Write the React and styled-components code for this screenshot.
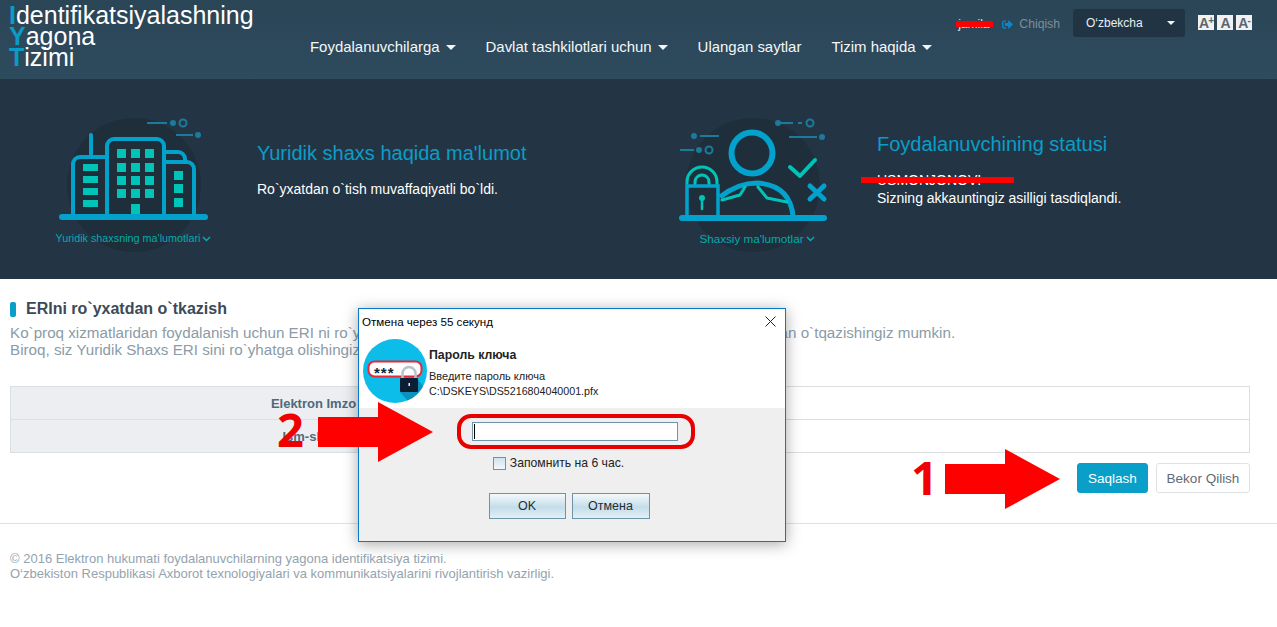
import React from "react";
import styled, { createGlobalStyle } from "styled-components";
import { FaSignOutAlt } from "react-icons/fa";

const Global = createGlobalStyle`
  html, body { margin: 0; padding: 0; background: #fff; overflow: hidden; }
  body { font-family: "Liberation Sans", Arial, sans-serif; }
  * { box-sizing: border-box; }
`;

const Page = styled.div`
  position: relative;
  width: 1277px;
  height: 627px;
  overflow: hidden;
`;

/* ---------- header ---------- */
const Header = styled.header`
  height: 79px;
  display: flex;
  background: linear-gradient(#2a4556, #2e4b5e);
`;
const Logo = styled.div`
  width: 310px;
  flex: none;
  padding: 5px 0 0 9px;
  font-size: 25px;
  line-height: 21px;
  color: #fff;
  white-space: nowrap;
`;
const LogoLine = styled.div``;
const LogoMark = styled.span`
  color: #0a9bc6;
  font-weight: 700;
`;
const HeaderMain = styled.div`
  flex: 1;
  display: flex;
  flex-direction: column;
`;
const Utility = styled.div`
  height: 37px;
  padding: 9px 25px 0 0;
  display: flex;
  justify-content: flex-end;
  align-items: flex-start;
`;
const UserName = styled.span`
  margin-top: 8px;
  font-size: 12px;
  color: #dfe6ea;
  width: 37px;
  text-align: center;
  line-height: 14px;
`;
const Logout = styled.span`
  display: flex;
  align-items: center;
  margin: 8px 13px 0 10px;
  font-size: 12.2px;
  line-height: 14px;
  color: #7d8f9b;
  gap: 6px;
  svg { color: #0a87c9; font-size: 11px; }
`;
const LangSelect = styled.div`
  width: 112px;
  height: 28px;
  padding: 0 10px 0 13px;
  border-radius: 3px;
  background: #213443;
  color: #e8eef2;
  font-size: 12px;
  display: flex;
  align-items: center;
  justify-content: space-between;
`;
const FontSizes = styled.div`
  display: flex;
  gap: 3px;
  margin: 6px 0 0 13px;
`;
const FontBtn = styled.span`
  width: 16px;
  height: 15px;
  background: #f1f1f1;
  color: #5b6670;
  font-size: 14px;
  font-weight: 700;
  line-height: 16px;
  text-align: center;
  white-space: nowrap;
  letter-spacing: -1px;
  sup { font-size: 10px; line-height: 0; vertical-align: 4px; }
`;
const Nav = styled.nav`
  display: flex;
  gap: 30px;
  padding-top: 1px;
`;
const NavItem = styled.span`
  display: flex;
  align-items: center;
  gap: 6px;
  font-size: 14.95px;
  line-height: 18px;
  color: #f4f7f9;
`;
const Caret = styled.i`
  display: inline-block;
  width: 0;
  height: 0;
  border-left: ${(p) => p.$size || 5}px solid transparent;
  border-right: ${(p) => p.$size || 5}px solid transparent;
  border-top: ${(p) => (p.$size ? p.$size : 5)}px solid #f2f5f7;
`;

/* ---------- hero ---------- */
const Hero = styled.section`
  height: 200px;
  background: #233544;
  display: grid;
  grid-template-columns: 618px 1fr;
`;
const HeroPanel = styled.div`
  display: flex;
  align-items: flex-start;
  padding-left: ${(p) => p.$pad}px;
`;
const Graphic = styled.div`
  position: relative;
  flex: none;
  width: ${(p) => p.$w}px;
  height: 134px;
  margin-top: 39px;
  svg { display: block; }
`;
const GraphicLabel = styled.div`
  position: absolute;
  left: ${(p) => p.$shift}px;
  right: 0;
  top: 114px;
  font-size: ${(p) => p.$size}px;
  line-height: 13px;
  color: #05a9ab;
  white-space: nowrap;
  display: flex;
  justify-content: center;
  align-items: center;
  gap: 2px;
`;
const HeroText = styled.div`
  margin-left: ${(p) => p.$gap}px;
  padding-top: ${(p) => p.$top}px;
`;
const HeroTitle = styled.h2`
  margin: 0;
  font-weight: 400;
  font-size: 20px;
  line-height: 24px;
  color: #0a9dc8;
  white-space: nowrap;
`;
const HeroLine = styled.p`
  margin: ${(p) => p.$mt || 0}px 0 0;
  font-size: 14px;
  line-height: 18px;
  color: #fff;
  white-space: nowrap;
`;

/* ---------- content ---------- */
const Content = styled.main`
  padding: 21px 27px 0 10px;
`;
const SectionTitle = styled.h3`
  margin: 0;
  font-size: 16px;
  line-height: 18px;
  font-weight: 700;
  color: #3c4a58;
  display: flex;
  align-items: center;
  gap: 10px;
  &::before {
    content: "";
    width: 6px;
    height: 15px;
    border-radius: 2px;
    background: #0a9fc9;
  }
`;
const Lead = styled.p`
  margin: 6px 0 0;
  font-size: 15.2px;
  line-height: 17px;
  color: #8b9ba7;
  white-space: nowrap;
`;
const DataTable = styled.table`
  margin-top: 28px;
  width: 100%;
  border-collapse: collapse;
  table-layout: fixed;
`;
const Cell = styled.td`
  height: 33px;
  padding: 0;
  border: 1px solid #dcdfe2;
  font-size: 13px;
  font-weight: 700;
  text-align: center;
  color: #50697a;
  background: ${(p) => (p.$label ? "#eceef1" : "#fff")};
  width: ${(p) => (p.$label ? "606px" : "auto")};
`;
const Actions = styled.div`
  margin-top: 10px;
  display: flex;
  justify-content: flex-end;
  gap: 8px;
`;
const Button = styled.button`
  height: 30px;
  width: ${(p) => p.$w}px;
  border-radius: 3px;
  border: 1px solid ${(p) => (p.$primary ? "#0a9fc9" : "#dfe2e5")};
  background: ${(p) => (p.$primary ? "#0a9fc9" : "#fff")};
  color: ${(p) => (p.$primary ? "#fff" : "#5f6b75")};
  font: 400 13.5px "Liberation Sans", Arial, sans-serif;
  padding: 0;
`;
const Footer = styled.footer`
  margin-top: 30px;
  border-top: 1px solid #dfe2e5;
  padding: 27px 10px 0;
  font-size: 13px;
  line-height: 15px;
  color: #94a3ad;
`;
const FooterLine = styled.div``;

/* ---------- overlays ---------- */
const Redaction = styled.div`
  position: absolute;
  left: ${(p) => p.$x}px;
  top: ${(p) => p.$y}px;
  width: ${(p) => p.$w}px;
  height: 6px;
  background: #ff0000;
`;
const Dialog = styled.div`
  position: absolute;
  left: 358px;
  top: 308px;
  width: 428px;
  height: 234px;
  border: 1px solid #0a78c8;
  background: #efefef;
  box-shadow: 0 2px 14px rgba(0, 0, 0, 0.35);
  color: #1a1a1a;
  display: flex;
  flex-direction: column;
`;
const DialogHead = styled.div`
  background: #fff;
  height: 99px;
  padding: 0 0 0 3px;
`;
const TitleBar = styled.div`
  height: 24px;
  margin-bottom: 2px;
  display: flex;
  align-items: center;
  justify-content: space-between;
  padding-right: 9px;
  font-size: 11.6px;
  color: #000;
`;
const HeadBody = styled.div`
  display: flex;
  align-items: flex-start;
  svg { flex: none; margin-top: 3px; display: block; }
`;
const HeadText = styled.div`
  margin-left: 1px;
  padding-top: 13px;
  color: #222;
`;
const HeadTitle = styled.div`
  font-size: 12.3px;
  font-weight: 700;
  line-height: 14px;
  margin-bottom: 7px;
`;
const HeadLine = styled.div`
  font-size: ${(p) => p.$size}px;
  line-height: 15px;
  white-space: nowrap;
`;
const DialogBody = styled.div`
  flex: 1;
  display: flex;
  flex-direction: column;
  align-items: center;
  padding-top: 6px;
`;
const PasswordRing = styled.div`
  width: 238px;
  height: 35px;
  border: 4px solid #e80000;
  border-radius: 14px;
  display: flex;
  align-items: center;
  justify-content: center;
  margin-left: 8px;
`;
const PasswordInput = styled.div`
  width: 206px;
  height: 19px;
  margin-right: 2px;
  border: 1px solid #6f93a8;
  background: #fff;
  padding: 1px 0 1px 1px;
  &::before {
    content: "";
    display: block;
    width: 1px;
    height: 15px;
    background: #000;
  }
`;
const Remember = styled.label`
  display: flex;
  align-items: center;
  gap: 4px;
  margin-top: 7px;
  margin-right: 27px;
  font-size: 12.2px;
  line-height: 14px;
  color: #222;
`;
const CheckBox = styled.span`
  width: 13px;
  height: 13px;
  border: 1px solid #6f93a8;
  background: linear-gradient(#cfe3ee, #f4f8fa);
`;
const DialogActions = styled.div`
  display: flex;
  gap: 6px;
  margin-top: 23px;
  margin-right: 6px;
`;
const DialogButton = styled.button`
  width: ${(p) => p.$w}px;
  height: 26px;
  padding: 0;
  border: 1px solid #6f93a8;
  background: linear-gradient(#f4f9fb, #c3dde9 55%, #e3eff5);
  color: #1d2d38;
  font: 400 12.5px "Liberation Sans", Arial, sans-serif;
`;
const Step = styled.div`
  position: absolute;
  left: ${(p) => p.$x}px;
  top: ${(p) => p.$y}px;
  font-size: 47px;
  line-height: 47px;
  font-weight: 700;
  color: #f00000;
  font-family: "Open Sans", "Liberation Sans", sans-serif;
`;
const ArrowShape = styled.svg`
  position: absolute;
  left: ${(p) => p.$x}px;
  top: ${(p) => p.$y}px;
`;

const Building = () => (
  <svg width="160" height="134" viewBox="55 118 160 134" fill="none">
    <circle cx="134" cy="185" r="67" fill="#1e2e3b" />
    <g stroke="#1b7b9a" strokeWidth="2">
      <path d="M147 123H167M176 135H193" />
      <circle cx="183" cy="123" r="3.5" />
    </g>
    <g fill="#1b7b9a">
      <circle cx="173" cy="123" r="3" />
      <circle cx="198" cy="135" r="3" />
    </g>
    <g stroke="#02a2cc" strokeWidth="4" strokeLinecap="round">
      <path d="M91 135V156" />
      <path d="M73 217V164a7 7 0 0 1 7-7H106" />
      <path d="M107 217V146a7 7 0 0 1 7-7H157a7 7 0 0 1 7 7V217" />
      <path d="M165 152H178a7 7 0 0 1 7 7V162" />
      <path d="M165 162H187a7 7 0 0 1 7 7V217" />
    </g>
    <path d="M62 217H205" stroke="#02a2cc" strokeWidth="6" strokeLinecap="round" />
    <g fill="#00c4b8">
      {[149, 163, 176, 189].map((y) =>
        [117, 131, 145].map((x) => <rect key={`${x}-${y}`} x={x} y={y} width="9" height="9" />)
      )}
      <rect x="131" y="204" width="9" height="10" />
      {[164, 176, 188, 200].map((y) => <rect key={y} x="83" y={y} width="15" height="7" />)}
      {[171, 184, 198].map((y) => <rect key={y} x="174" y={y} width="9" height="9" />)}
    </g>
  </svg>
);

const Person = () => (
  <svg width="160" height="134" viewBox="673 118 160 134" fill="none">
    <circle cx="753" cy="185" r="67" fill="#1e2e3b" />
    <g stroke="#1b7b9a" strokeWidth="2">
      <path d="M778 123H793M798 123H802M789 137H817M700 136H719M680 150H694" />
      <circle cx="810" cy="123" r="3.5" />
      <circle cx="709" cy="150" r="3.5" />
    </g>
    <g fill="#1b7b9a">
      <circle cx="778" cy="123" r="3" />
      <circle cx="822" cy="137" r="3" />
      <circle cx="694" cy="136" r="3" />
      <circle cx="699" cy="150" r="3" />
    </g>
    <circle cx="752" cy="153" r="20.5" stroke="#02a2cc" strokeWidth="6" />
    <path d="M720 197Q738 183 757 183Q790 185 793 216" stroke="#02a2cc" strokeWidth="5" />
    <g stroke="#00c4b8" strokeWidth="3" strokeLinecap="round" strokeLinejoin="round">
      <path d="M722 200L740 195L745 187M758 187L767 198L787 202" />
      <path d="M687 184V182a15 15 0 0 1 30 0V184" />
      <path d="M695 184V182a7 7 0 0 1 14 0V184" />
    </g>
    <path d="M790 167L800 176L815 160" stroke="#00c4b8" strokeWidth="4" strokeLinecap="round" strokeLinejoin="round" />
    <path d="M810 186L824 199M824 186L810 199" stroke="#02a2cc" strokeWidth="5" strokeLinecap="round" />
    <rect x="687" y="186" width="31" height="32" stroke="#02a2cc" strokeWidth="3.5" />
    <circle cx="702" cy="198" r="3" fill="#00c4b8" />
    <path d="M702 199V209" stroke="#00c4b8" strokeWidth="2.5" strokeLinecap="round" />
    <path d="M682 218H824" stroke="#02a2cc" strokeWidth="6" strokeLinecap="round" />
  </svg>
);

const Chevron = () => (
  <svg width="9" height="6" viewBox="0 0 9 6" fill="none">
    <path d="M1 1L4.5 4.5L8 1" stroke="#05b0b0" strokeWidth="1.4" />
  </svg>
);

const KeyIcon = () => (
  <svg width="66" height="66" viewBox="361 338 66 66" fill="none">
    <defs>
      <clipPath id="keyDisc"><circle cx="394" cy="371" r="32" /></clipPath>
    </defs>
    <circle cx="394" cy="371" r="32" fill="#0bbde8" />
    <path d="M399 392L417 380L430 395L415 410Z" fill="#0a92bd" clipPath="url(#keyDisc)" />
    <rect x="367.5" y="361.5" width="53" height="15" rx="6" fill="#fff" stroke="#e6283c" strokeWidth="2" />
    <text x="373" y="378" fontFamily="Liberation Sans" fontWeight="700" fontSize="15" letterSpacing="1" fill="#12263c">***</text>
    <path d="M401.5 379V373.5a6.5 6.5 0 0 1 13 0V379" stroke="#b9c3ca" strokeWidth="2.5" />
    <rect x="399" y="378" width="18" height="14" rx="1" fill="#0b1e33" />
    <rect x="407.5" y="383" width="1.4" height="3" fill="#fff" />
  </svg>
);

const CloseGlyph = () => (
  <svg width="11" height="11" viewBox="0 0 11 11" fill="none">
    <path d="M.5.5L10.5 10.5M10.5.5L.5 10.5" stroke="#222" strokeWidth="1" />
  </svg>
);

const Arrow = ({ x, y }) => (
  <ArrowShape $x={x} $y={y} width="115" height="60" viewBox="0 0 115 60">
    <path d="M0 15H60V0L115 30L60 60V45H0Z" fill="#ff0000" />
  </ArrowShape>
);

export default function App() {
  return (
    <Page>
      <Global />
      <Header>
        <Logo>
          <LogoLine><LogoMark>I</LogoMark>dentifikatsiyalashning</LogoLine>
          <LogoLine><LogoMark>Y</LogoMark>agona</LogoLine>
          <LogoLine><LogoMark>T</LogoMark>izimi</LogoLine>
        </Logo>
        <HeaderMain>
          <Utility>
            <UserName>jamila</UserName>
            <Logout><FaSignOutAlt />Chiqish</Logout>
            <LangSelect>O‘zbekcha<Caret $size={4} /></LangSelect>
            <FontSizes>
              <FontBtn>A<sup>+</sup></FontBtn>
              <FontBtn>A</FontBtn>
              <FontBtn>A<sup>-</sup></FontBtn>
            </FontSizes>
          </Utility>
          <Nav>
            <NavItem>Foydalanuvchilarga<Caret /></NavItem>
            <NavItem>Davlat tashkilotlari uchun<Caret /></NavItem>
            <NavItem>Ulangan saytlar</NavItem>
            <NavItem>Tizim haqida<Caret /></NavItem>
          </Nav>
        </HeaderMain>
      </Header>

      <Hero>
        <HeroPanel $pad={55}>
          <Graphic $w={160}>
            <Building />
            <GraphicLabel $size={10.8} $shift={-3}>Yuridik shaxsning ma'lumotlari<Chevron /></GraphicLabel>
          </Graphic>
          <HeroText $gap={42} $top={62}>
            <HeroTitle>Yuridik shaxs haqida ma'lumot</HeroTitle>
            <HeroLine $mt={15}>Ro`yxatdan o`tish muvaffaqiyatli bo`ldi.</HeroLine>
          </HeroText>
        </HeroPanel>
        <HeroPanel $pad={55}>
          <Graphic $w={160}>
            <Person />
            <GraphicLabel $size={11.7} $shift={8}>Shaxsiy ma'lumotlar<Chevron /></GraphicLabel>
          </Graphic>
          <HeroText $gap={44} $top={53}>
            <HeroTitle>Foydalanuvchining statusi</HeroTitle>
            <HeroLine $mt={15}>USMONJONOV!</HeroLine>
            <HeroLine>Sizning akkauntingiz asilligi tasdiqlandi.</HeroLine>
          </HeroText>
        </HeroPanel>
      </Hero>

      <Content>
        <SectionTitle>ERIni ro`yxatdan o`tkazish</SectionTitle>
        <Lead>
          Ko`proq xizmatlaridan foydalanish uchun ERI ni ro`yxatdan o`tkazing. Va siz Jismoniy Shaxs ERI sini ham ro`yxatdan o`tqazishingiz mumkin.
          <br />
          Biroq, siz Yuridik Shaxs ERI sini ro`yhatga olishingiz kerak.
        </Lead>
        <DataTable>
          <tbody>
            <tr><Cell $label>Elektron Imzo</Cell><Cell /></tr>
            <tr><Cell $label>Ism-sharif</Cell><Cell /></tr>
          </tbody>
        </DataTable>
        <Actions>
          <Button $primary $w={71}>Saqlash</Button>
          <Button $w={94}>Bekor Qilish</Button>
        </Actions>
      </Content>
      <Footer>
        <FooterLine>© 2016 Elektron hukumati foydalanuvchilarning yagona identifikatsiya tizimi.</FooterLine>
        <FooterLine>O‘zbekiston Respublikasi Axborot texnologiyalari va kommunikatsiyalarini rivojlantirish vazirligi.</FooterLine>
      </Footer>

      <Redaction $x={956} $y={21} $w={37} />
      <Redaction $x={861} $y={177} $w={153} />

      <Dialog>
        <DialogHead>
          <TitleBar>Отмена через 55 секунд<CloseGlyph /></TitleBar>
          <HeadBody>
            <KeyIcon />
            <HeadText>
              <HeadTitle>Пароль ключа</HeadTitle>
              <HeadLine $size={11}>Введите пароль ключа</HeadLine>
              <HeadLine $size={10.7}>C:\DSKEYS\DS5216804040001.pfx</HeadLine>
            </HeadText>
          </HeadBody>
        </DialogHead>
        <DialogBody>
          <PasswordRing><PasswordInput /></PasswordRing>
          <Remember><CheckBox />Запомнить на 6 час.</Remember>
          <DialogActions>
            <DialogButton $w={77}>OK</DialogButton>
            <DialogButton $w={78}>Отмена</DialogButton>
          </DialogActions>
        </DialogBody>
      </Dialog>

      <Step $x={277} $y={406}>2</Step>
      <Arrow x={318} y={402} />
      <Step $x={911} $y={454}>1</Step>
      <Arrow x={945} y={449} />
    </Page>
  );
}
